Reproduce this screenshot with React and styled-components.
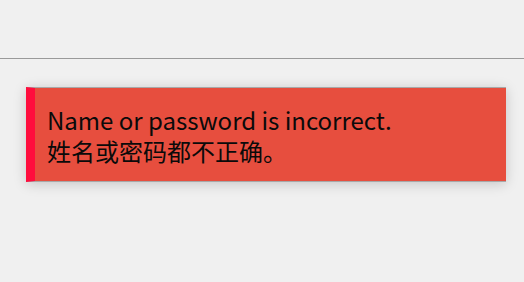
import React from 'react';
import styled, { createGlobalStyle } from "styled-components";

const GlobalStyle = createGlobalStyle`
    html, body {
        margin: 0;
        padding: 0;
        background-color: #f0f0f0;
    }
`;

const Page = styled.div`
    width: 524px;
    height: 282px;
    padding-top: 58px;
    box-sizing: border-box;
`;

const Rule = styled.hr`
    margin: 0;
    border: none;
    border-top: 1px solid #9a9a9a;
`;

const Alert = styled.div`
    margin: 28px 18px 0 26px;
    height: 95px;
    box-sizing: border-box;
    background-color: #e74e3e;
    border-left: 9px solid #ff0d3d;
    border-top: 1px solid #a8a8a8;
    border-bottom: 1px solid #a8a8a8;
    box-shadow: 0 2px 12px rgba(0, 0, 0, 0.18);
    padding: 16px 12px;
    font-family: "Noto Sans CJK SC", "Noto Sans", sans-serif;
    font-size: 24px;
    line-height: 31px;
    color: #0a0a0a;
`;

function App() {
    return (
        <>
            <GlobalStyle />
            <Page>
                <Rule />
                <Alert>
                    Name or password is incorrect.<br />
                    姓名或密码都不正确。
                </Alert>
            </Page>
        </>
    );
}

export default App;
